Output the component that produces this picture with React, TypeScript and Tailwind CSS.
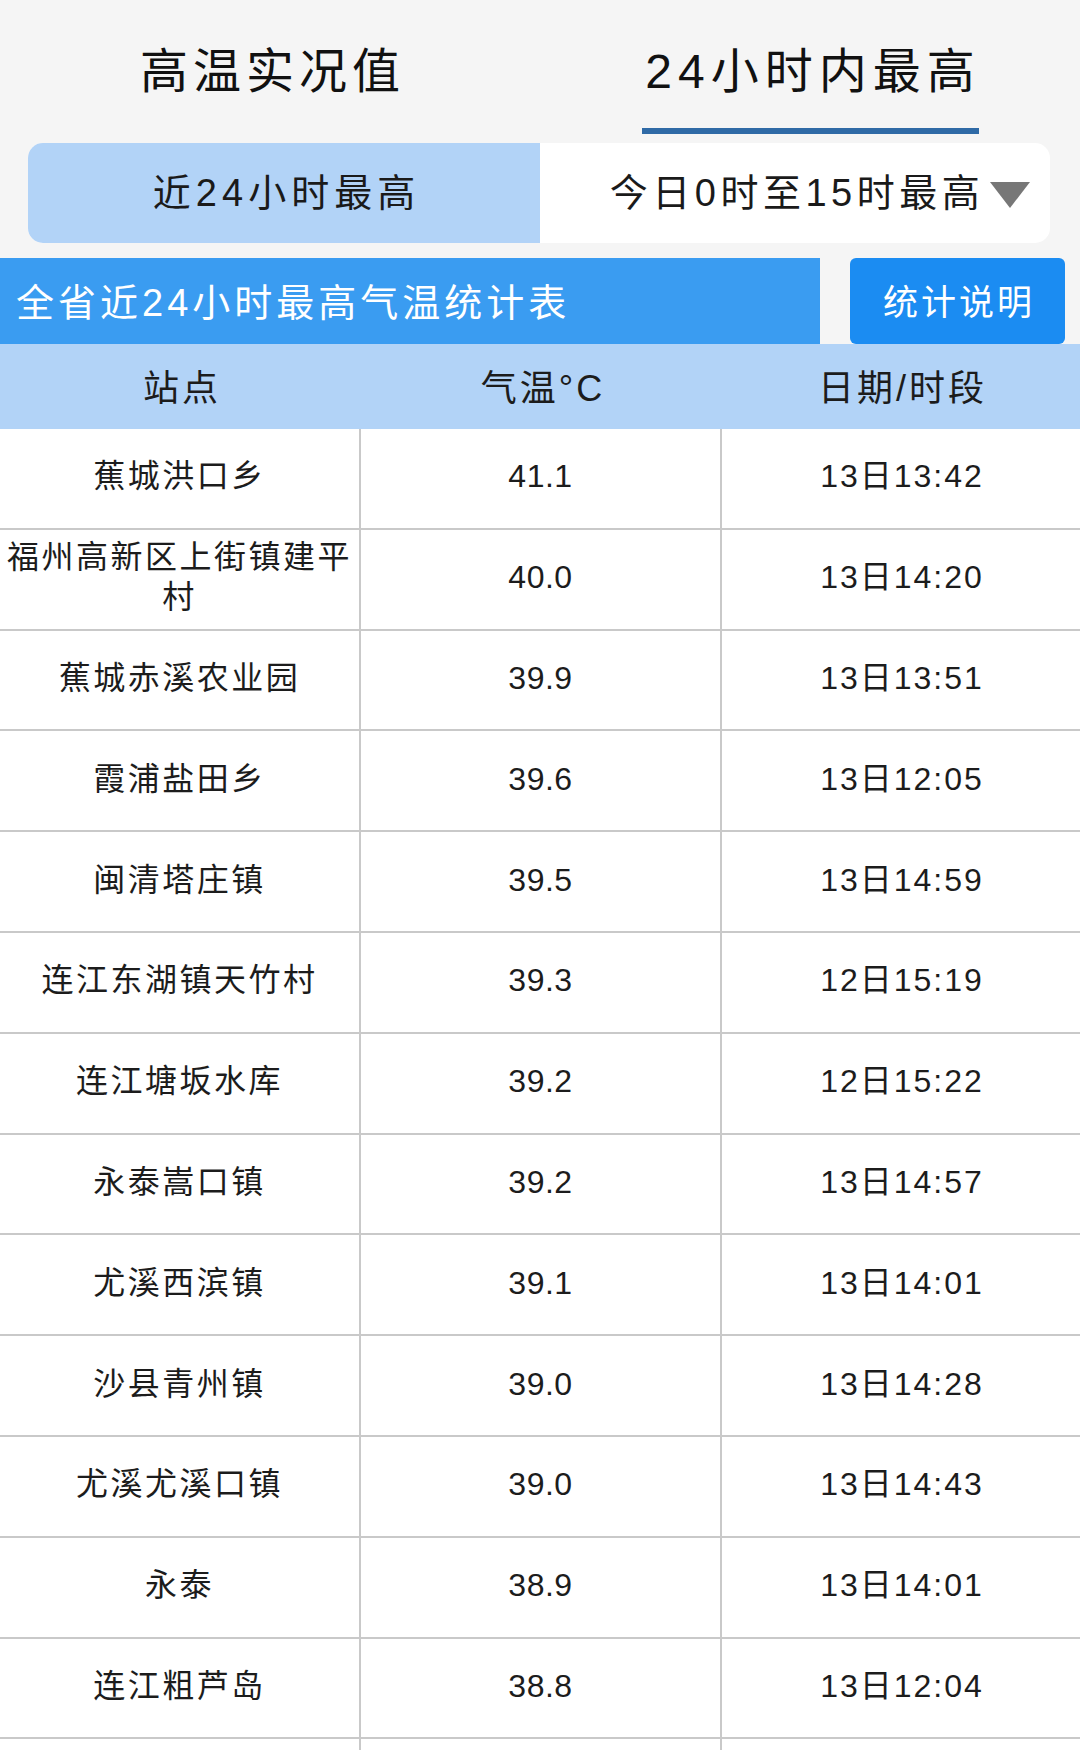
import React from "react";

const rows: [string, string, string][] = [
  ["蕉城洪口乡", "41.1", "13日13:42"],
  ["福州高新区上街镇建平村", "40.0", "13日14:20"],
  ["蕉城赤溪农业园", "39.9", "13日13:51"],
  ["霞浦盐田乡", "39.6", "13日12:05"],
  ["闽清塔庄镇", "39.5", "13日14:59"],
  ["连江东湖镇天竹村", "39.3", "12日15:19"],
  ["连江塘坂水库", "39.2", "12日15:22"],
  ["永泰嵩口镇", "39.2", "13日14:57"],
  ["尤溪西滨镇", "39.1", "13日14:01"],
  ["沙县青州镇", "39.0", "13日14:28"],
  ["尤溪尤溪口镇", "39.0", "13日14:43"],
  ["永泰", "38.9", "13日14:01"],
  ["连江粗芦岛", "38.8", "13日12:04"],
  ["", "", ""],
];

export default function App() {
  return (
    <div
      className="w-[1080px] h-[1750px] overflow-hidden bg-[#f5f5f5] text-[#1c1c1c]"
      style={{ fontFamily: '"Liberation Sans", "Noto Sans CJK SC", sans-serif' }}
    >
      {/* Top tabs */}
      <div className="flex h-[143px]">
        <div className="flex-1 flex flex-col items-center">
          <div className="h-[128px] pt-[16px] flex items-center text-[48px] leading-none tracking-[5px] pl-[5px] text-[#111]">
            高温实况值
          </div>
        </div>
        <div className="flex-1 flex flex-col items-center">
          <div className="h-[128px] pt-[16px] flex items-center text-[48px] leading-none tracking-[6px] pl-[6px] text-[#111]">
            24小时内最高
          </div>
          <div className="w-[337px] h-[6px] bg-[#2f6aa6]" />
        </div>
      </div>

      {/* Segmented control */}
      <div className="pl-[28px] pr-[30px]">
        <div className="flex h-[100px] rounded-[15px] overflow-hidden bg-white">
          <div className="w-[512px] bg-[#b2d3f7] flex items-center justify-center text-[38px] leading-none tracking-[5px] pl-[5px] text-[#1a1a1a]">
            近24小时最高
          </div>
          <div className="relative flex-1 flex items-center justify-center text-[38px] leading-none tracking-[4.5px] pl-[4px] text-[#1a1a1a]">
            今日0时至15时最高
            <svg
              className="absolute right-[20px] top-[39px]"
              width="40"
              height="26"
              viewBox="0 0 40 26"
            >
              <polygon points="0,0 40,0 20,26" fill="#777777" />
            </svg>
          </div>
        </div>
      </div>

      {/* Title bar */}
      <div className="flex mt-[15px] h-[86px]">
        <div className="w-[820px] bg-[#3a9cf1] flex items-center pl-[16px] pt-[3px] text-white text-[38px] leading-none tracking-[4px]">
          全省近24小时最高气温统计表
        </div>
        <div className="ml-[30px] w-[215px] bg-[#1b8cf2] rounded-[6px] flex items-center justify-center pt-[3px] text-white text-[35px] leading-none tracking-[3px] pl-[3px]">
          统计说明
        </div>
      </div>

      {/* Table header */}
      <div className="grid grid-cols-[361px_361px_1fr] h-[85px] bg-[#b2d3f7] text-[36px] leading-none tracking-[3px]">
        <div className="flex items-center justify-center pl-[3px] pt-[5px]">站点</div>
        <div className="flex items-center justify-center pl-[3px] pt-[5px]">气温°C</div>
        <div className="flex items-center justify-center pl-[3px] pt-[5px]">日期/时段</div>
      </div>

      {/* Table rows */}
      <div className="bg-white">
        {rows.map((r, i) => (
          <div
            key={i}
            className="grid grid-cols-[361px_361px_1fr] h-[100.8px] border-b-2 border-[#c9c9c9] text-[32px]"
          >
            <div className="flex items-center justify-center text-center border-r-2 border-[#c9c9c9] px-[5px] pb-[4px] leading-[40px] tracking-[2.5px]">
              {r[0]}
            </div>
            <div className="flex items-center justify-center border-r-2 border-[#c9c9c9] pb-[4px] leading-[40px] tracking-[0.5px]">
              {r[1]}
            </div>
            <div className="flex items-center justify-center pb-[4px] leading-[40px] tracking-[2px] pl-[2px]">
              {r[2]}
            </div>
          </div>
        ))}
      </div>
    </div>
  );
}
